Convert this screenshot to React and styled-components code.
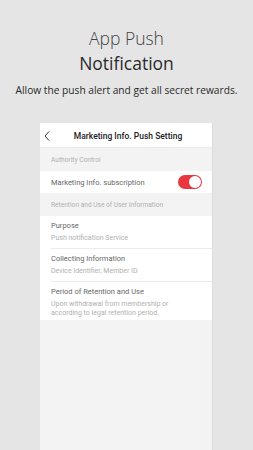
import React from "react";
import styled, { createGlobalStyle } from "styled-components";

const GlobalStyle = createGlobalStyle`
  html, body {
    margin: 0;
    padding: 0;
    background: #e5e5e5;
  }
  body {
    font-family: "Open Sans", "Noto Sans", sans-serif;
  }
`;

const Page = styled.div`
  width: 253px;
  height: 450px;
  overflow: hidden;
  display: flex;
  flex-direction: column;
  align-items: center;
  background: #e5e5e5;
`;

const Hero = styled.div`
  display: flex;
  flex-direction: column;
  align-items: center;
  padding-top: 26px;
  color: #333;
`;

const Title = styled.div`
  font-size: 17.5px;
  line-height: 25px;
  font-weight: ${(p) => (p.$light ? 300 : 400)};
  color: ${(p) => (p.$light ? "#444" : "#2a2a2a")};
`;

const Subtitle = styled.div`
  margin-top: 7px;
  font-size: 10.2px;
  line-height: 15px;
  color: #2a2a2a;
  white-space: nowrap;
`;

const Phone = styled.div`
  margin-top: 25px;
  width: 172px;
  flex: 1;
  background: #f3f3f3;
  border-right: 1px solid #dcdcdc;
  font-family: Roboto, "Noto Sans", sans-serif;
  display: flex;
  flex-direction: column;
`;

const Header = styled.div`
  height: 24px;
  background: #fff;
  display: flex;
  align-items: center;
  position: relative;
  border-bottom: 1px solid #ebebeb;
`;

const Back = styled.svg`
  position: absolute;
  left: 4px;
  top: 8px;
`;

const HeaderTitle = styled.div`
  flex: 1;
  text-align: center;
  font-size: 8.5px;
  font-weight: 500;
  color: #222;
  padding-left: 4px;
  padding-top: 2px;
`;

const SectionLabel = styled.div`
  height: 23px;
  display: flex;
  align-items: center;
  padding-left: 11px;
  font-size: 6.6px;
  color: #b0b0b0;
`;

const SwitchRow = styled.div`
  height: 22px;
  background: #fff;
  display: flex;
  align-items: center;
  justify-content: space-between;
  padding: 0 10px 0 11px;
  font-size: 7.5px;
  color: #666;
`;

const Toggle = styled.div`
  width: 24px;
  height: 14px;
  border-radius: 7px;
  background: #e8373e;
  position: relative;
`;

const Knob = styled.div`
  position: absolute;
  right: 1px;
  top: 1px;
  width: 12px;
  height: 12px;
  border-radius: 50%;
  background: #fff;
`;

const InfoList = styled.div`
  background: #fff;
  padding-left: 11px;
`;

const InfoItem = styled.div`
  padding: 4px 0 ${(p) => (p.$last ? "2px" : "5px")};
  border-bottom: ${(p) => (p.$last ? "none" : "1px solid #ececec")};
`;

const InfoTitle = styled.div`
  font-size: 7.5px;
  line-height: 12px;
  color: #666;
`;

const InfoText = styled.div`
  margin-top: 2px;
  font-size: 7px;
  line-height: 9px;
  color: #b0b0b0;
  padding-right: 30px;
`;

const info = [
  { title: "Purpose", text: "Push notification Service" },
  { title: "Collecting Information", text: "Device identifier, Member ID" },
  {
    title: "Period of Retention and Use",
    text: "Upon withdrawal from membership or according to legal retention period.",
  },
];

export default function App() {
  return (
    <>
      <GlobalStyle />
      <Page>
        <Hero>
          <Title $light>App Push</Title>
          <Title>Notification</Title>
          <Subtitle>Allow the push alert and get all secret rewards.</Subtitle>
        </Hero>
        <Phone>
          <Header>
            <Back width="6" height="10" viewBox="0 0 6 10">
              <path d="M5 0.5L1 5l4 4.5" fill="none" stroke="#333" strokeWidth="1" />
            </Back>
            <HeaderTitle>Marketing Info. Push Setting</HeaderTitle>
          </Header>
          <SectionLabel>Authority Control</SectionLabel>
          <SwitchRow>
            <span>Marketing Info. subscription</span>
            <Toggle>
              <Knob />
            </Toggle>
          </SwitchRow>
          <SectionLabel>Retention and Use of User Information</SectionLabel>
          <InfoList>
            {info.map((it, i) => (
              <InfoItem key={it.title} $last={i === info.length - 1}>
                <InfoTitle>{it.title}</InfoTitle>
                <InfoText>{it.text}</InfoText>
              </InfoItem>
            ))}
          </InfoList>
        </Phone>
      </Page>
    </>
  );
}
